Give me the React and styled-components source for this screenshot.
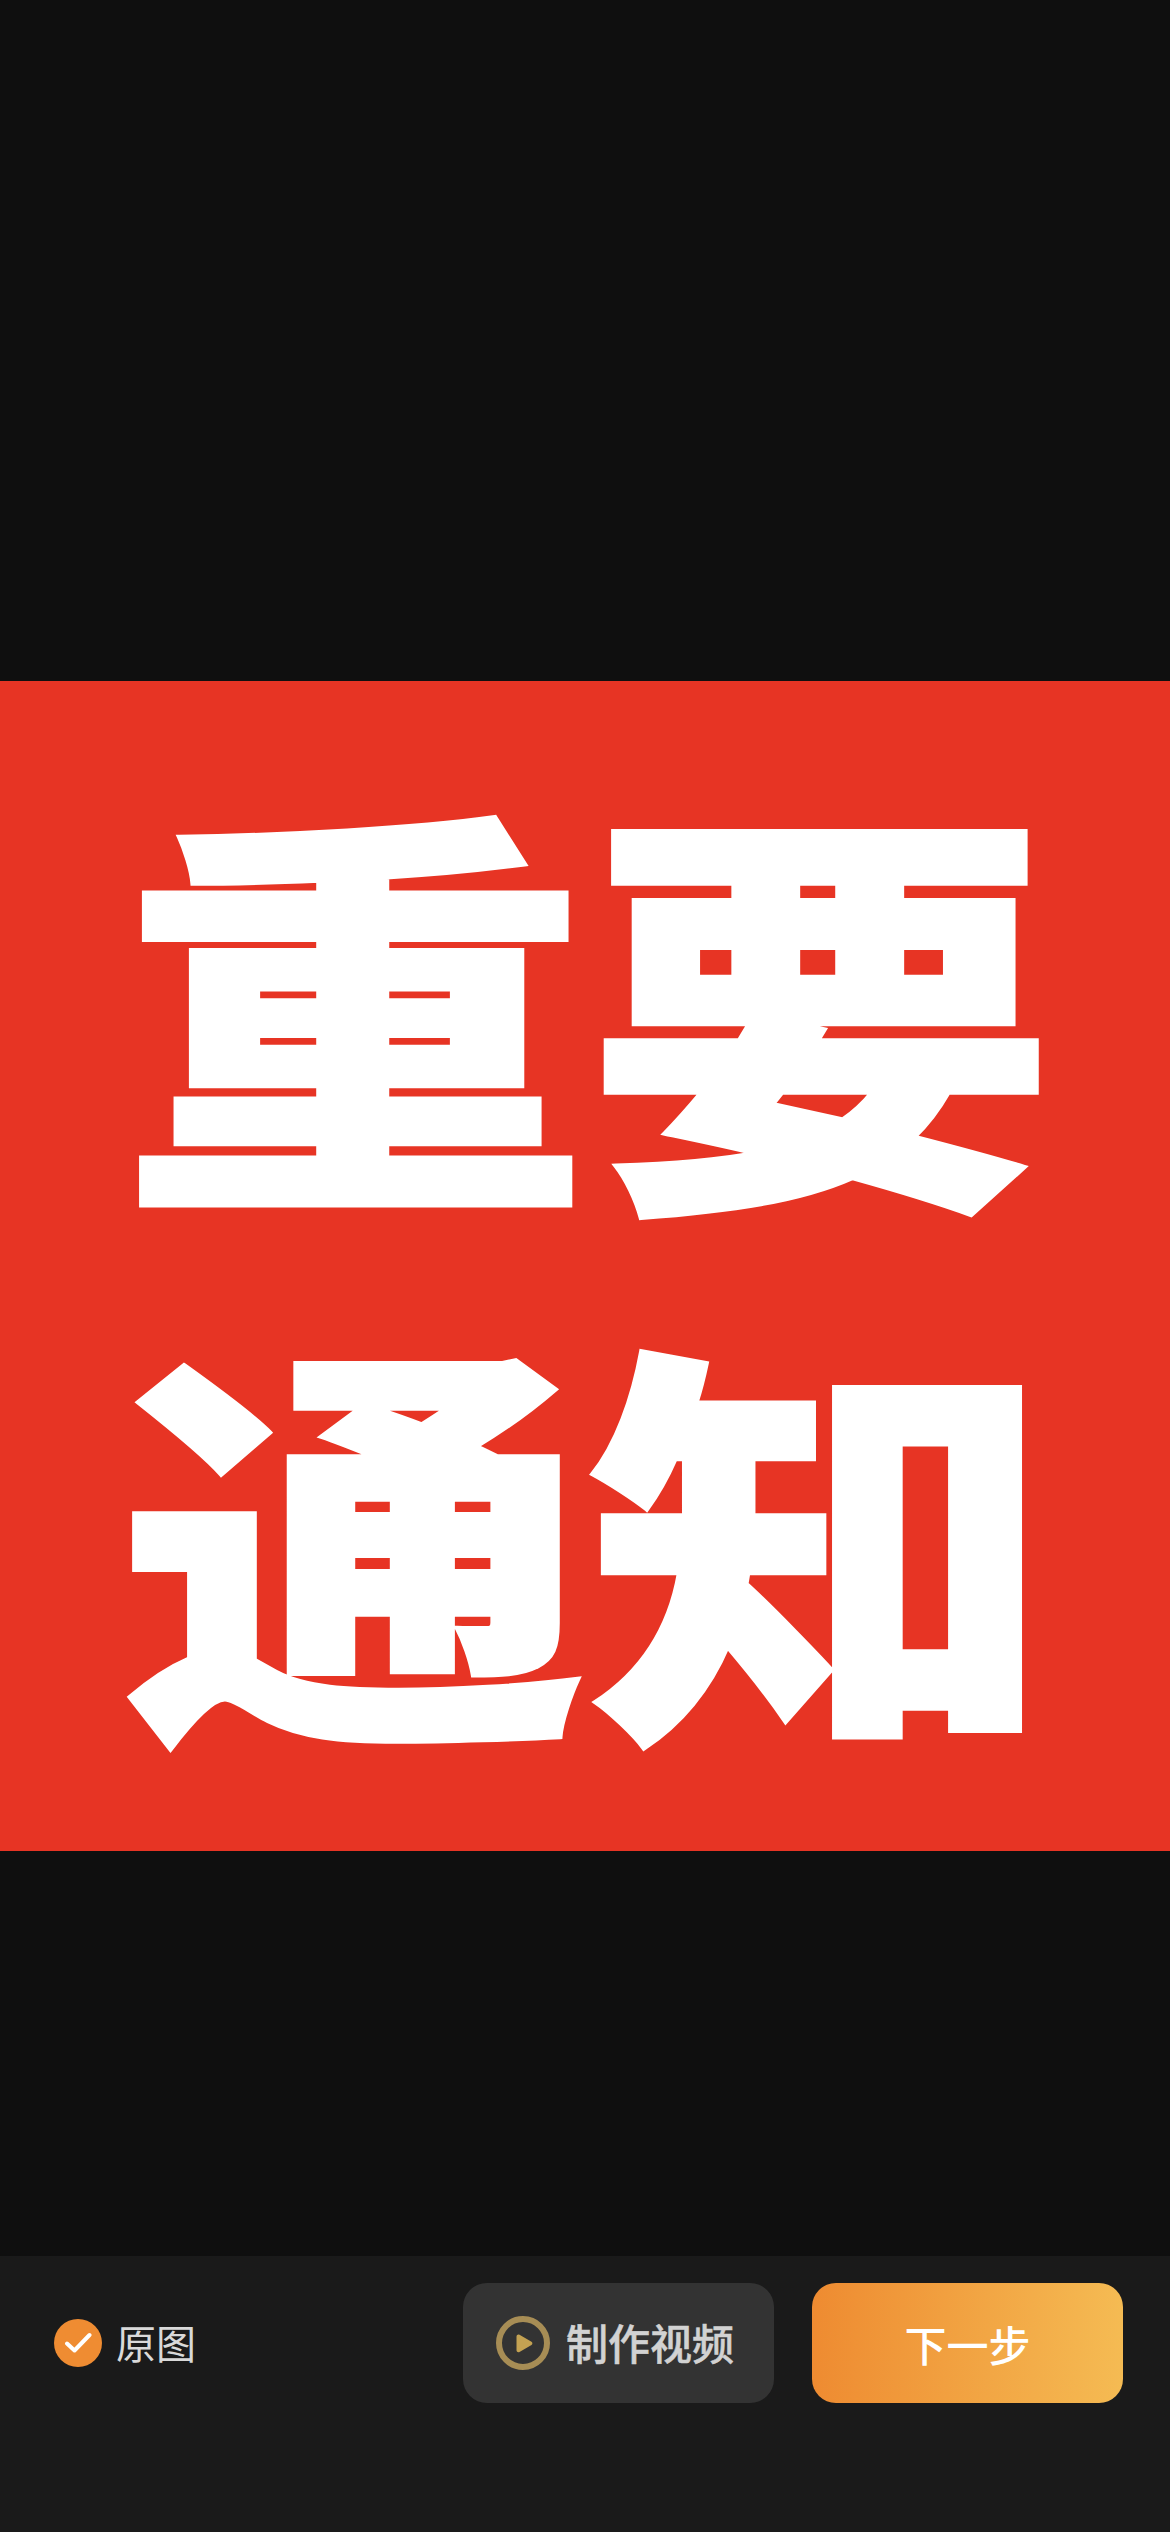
import styled, { createGlobalStyle } from "styled-components";

const GlobalStyle = createGlobalStyle`
  html, body {
    margin: 0;
    padding: 0;
    background: #0f0f0f;
  }
  body {
    font-family: "Noto Sans CJK SC", "Noto Sans", sans-serif;
  }
`;

export default function App() {
  return (
    <Page>
      <GlobalStyle />
      <Preview>
        <Poster>
          <PosterLine>重要</PosterLine>
          <PosterLine>通知</PosterLine>
        </Poster>
      </Preview>
      <BottomBar>
        <Original>
          <CheckBadge>
            <svg width="28" height="22" viewBox="0 0 28 22" fill="none">
              <path d="M3 11.5l7.5 7L25.5 3" stroke="#fff" strokeWidth="4" strokeLinecap="round" strokeLinejoin="round" />
            </svg>
          </CheckBadge>
          <OriginalLabel>原图</OriginalLabel>
        </Original>
        <Actions>
          <VideoButton>
            <svg width="54" height="54" viewBox="0 0 54 54" fill="none">
              <circle cx="27" cy="27" r="24" stroke="#a78d55" strokeWidth="6" />
              <path d="M20.5 20.5c0-1.6 1.7-2.5 3-1.7l12 7c1.2.7 1.2 2.5 0 3.2l-12 7c-1.3.8-3-.1-3-1.7z" fill="#c4a252" />
            </svg>
            <VideoLabel>制作视频</VideoLabel>
          </VideoButton>
          <NextButton>下一步</NextButton>
        </Actions>
      </BottomBar>
    </Page>
  );
}

const Page = styled.div`
  width: 1170px;
  height: 2532px;
  display: flex;
  flex-direction: column;
  background: #0f0f0f;
  overflow: hidden;
`;

const Preview = styled.div`
  height: 2256px;
  box-sizing: border-box;
  padding-top: 681px;
`;

const Poster = styled.div`
  width: 1170px;
  height: 1170px;
  background: #e73424;
  display: flex;
  flex-direction: column;
  align-items: center;
  padding: 113px 0 0 6px;
  gap: 133px;
  box-sizing: border-box;
`;

const PosterLine = styled.div`
  font-size: 466px;
  line-height: 400px;
  height: 400px;
  font-weight: 900;
  color: #fff;
  -webkit-text-stroke: 5px #fff;
  white-space: nowrap;
  transform: scaleY(0.9);
`;

const BottomBar = styled.div`
  flex: 1;
  display: flex;
  justify-content: space-between;
  padding: 27px 47px 0 54px;
  background: #1a1a1a;
`;

const Original = styled.div`
  height: 120px;
  display: flex;
  align-items: center;
  gap: 14px;
`;

const CheckBadge = styled.div`
  width: 48px;
  height: 48px;
  border-radius: 50%;
  background: #ef8c32;
  display: flex;
  align-items: center;
  justify-content: center;
`;

const OriginalLabel = styled.span`
  font-size: 40px;
  color: #d9d9d9;
  margin-bottom: 3px;
`;

const Actions = styled.div`
  display: flex;
  gap: 38px;
`;

const VideoButton = styled.div`
  width: 311px;
  height: 120px;
  box-sizing: border-box;
  padding-left: 33px;
  display: flex;
  align-items: center;
  gap: 16px;
  border-radius: 24px;
  background: #333333;
`;

const VideoLabel = styled.span`
  color: #d2d2d2;
  font-size: 42px;
  font-weight: 500;
  -webkit-text-stroke: 0.5px #d2d2d2;
  margin-bottom: 3px;
`;

const NextButton = styled.div`
  width: 311px;
  height: 120px;
  display: flex;
  align-items: center;
  justify-content: center;
  border-radius: 24px;
  background: linear-gradient(90deg, #ee8b31, #f5bb53);
  color: #fff;
  font-size: 42px;
  font-weight: 500;
`;
